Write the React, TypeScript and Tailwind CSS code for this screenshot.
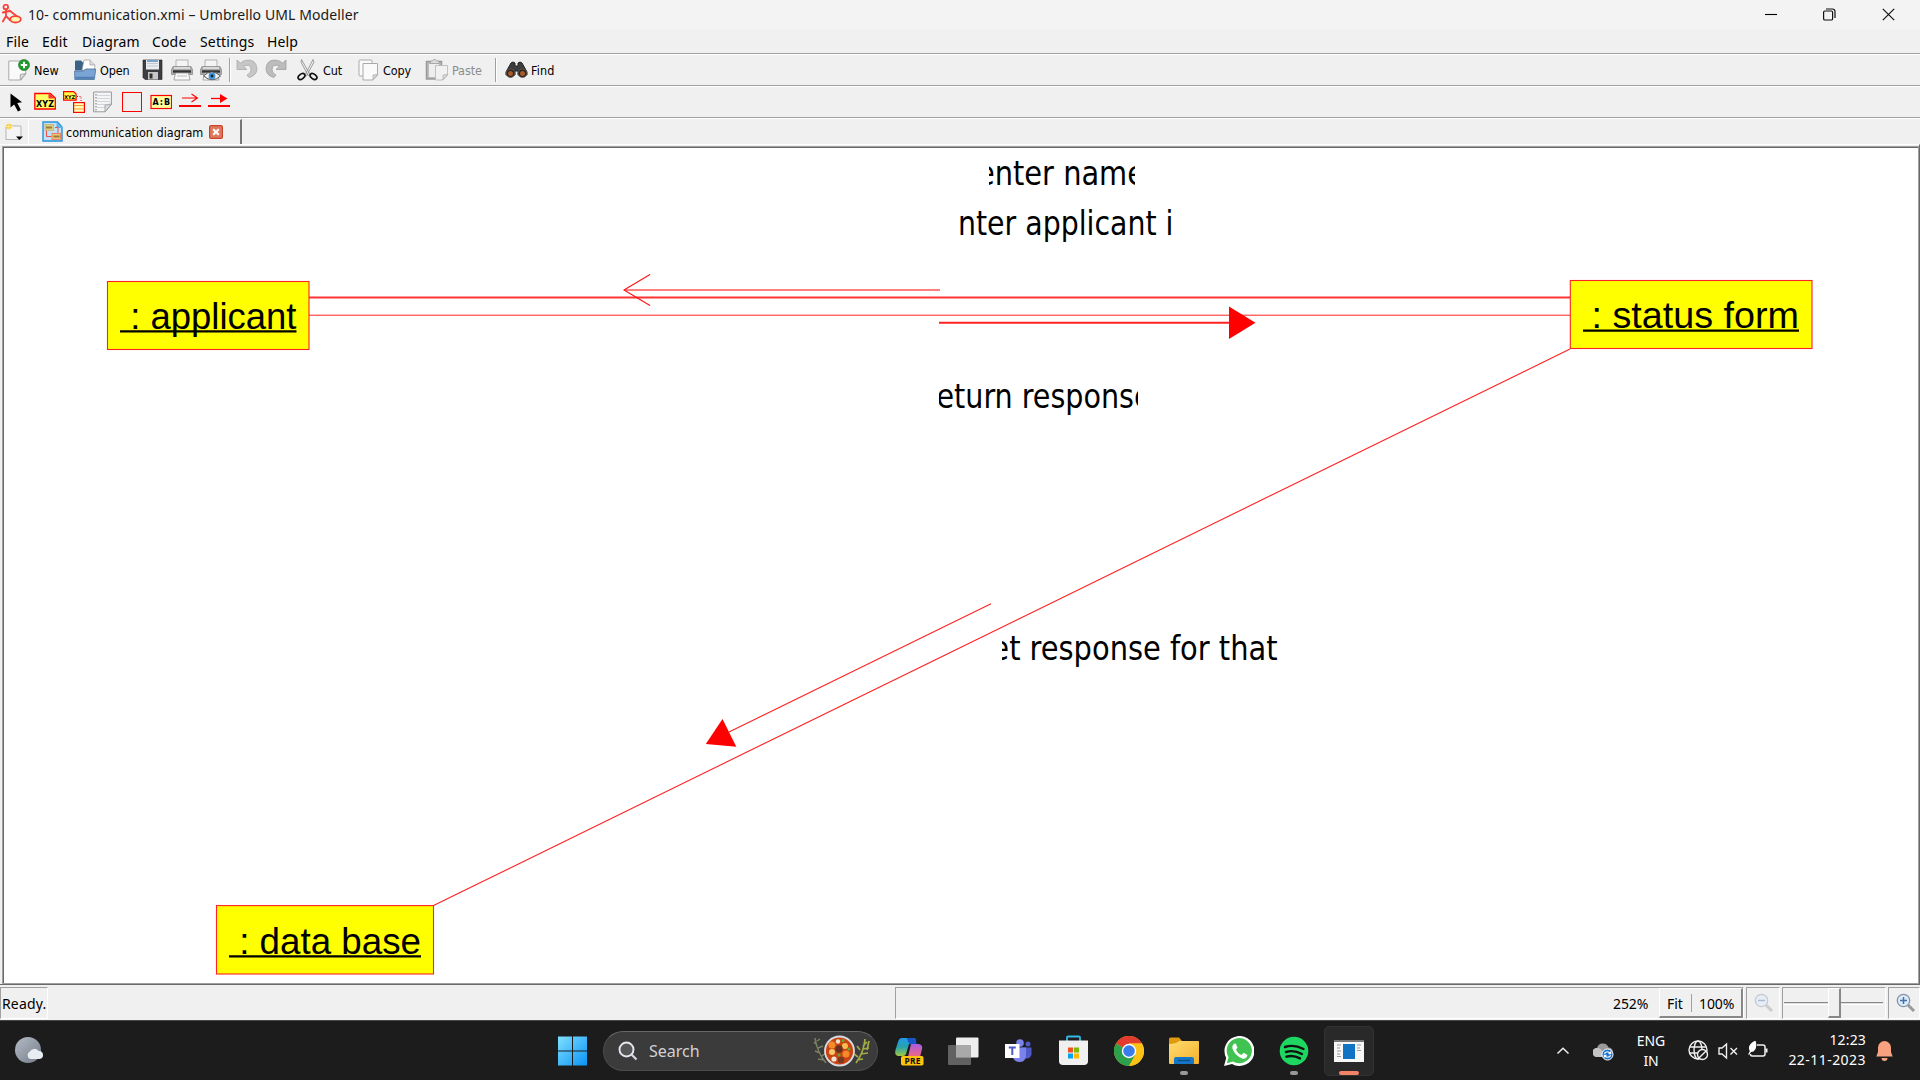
import React from "react";

const ui = "font-['Noto_Sans','Open_Sans',sans-serif]";
const tahoma = "font-['DejaVu_Sans_Condensed','DejaVu_Sans',sans-serif]";

type IconProps = { className?: string; w?: number; h?: number; children: React.ReactNode };
function Icon({ className = "", w = 22, h = 22, children }: IconProps) {
  return (
    <svg className={`block shrink-0 ${className}`} width={w} height={h} viewBox={`0 0 ${w} ${h}`} fill="none">
      {children}
    </svg>
  );
}

function TitleBar() {
  return (
    <div className="flex h-[29px] shrink-0 items-center bg-[#f3f3f3]">
      <Icon className="ml-[2px] mt-[-1px]" w={20} h={20}>
        <g stroke="#f4443c" strokeWidth="1.8" strokeLinecap="round">
          <circle cx="3.8" cy="3" r="2.3" />
          <path d="M4 5.500v6.500M.8 8.500l7-1.500M4 12l-3.200 5.500M4 12l4 4M7.500 6.500l7 5.500" />
          <ellipse cx="13.500" cy="15.300" rx="5.300" ry="3.200" fill="#fdf6b0" />
        </g>
      </Icon>
      <span className={`${ui} mt-[-1px] ml-[6px] w-[1700px] whitespace-nowrap text-[14px] tracking-[0.1px] text-[#1a1a1a]`}>
        10- communication.xmi – Umbrello UML Modeller
      </span>
      <Icon className="ml-[37px]" w={12} h={12}><path d="M0 5.500h12" stroke="#000" strokeWidth="1.100" /></Icon>
      <Icon className="ml-[46px]" w={13} h={13}>
        <rect x=".6" y="3" width="9" height="9" rx="1.300" stroke="#111" strokeWidth="1.200" />
        <path d="M3 1h6.500a2.500 2.500 0 0 1 2.500 2.500V10" stroke="#111" strokeWidth="1.200" />
      </Icon>
      <Icon className="ml-[46px]" w={13} h={13}><path d="M.8.800l11.400 11.400M12.200.800L.8 12.200" stroke="#111" strokeWidth="1.200" /></Icon>
    </div>
  );
}

function MenuBar() {
  const item = "whitespace-nowrap";
  return (
    <div className={`${ui} flex h-[24px] shrink-0 items-center pl-[6px] pt-[2px] text-[14px] leading-none tracking-[0.15px] text-black`}>
      <span className={`${item} w-[36px]`}>File</span>
      <span className={`${item} w-[40px]`}>Edit</span>
      <span className={`${item} w-[70px]`}>Diagram</span>
      <span className={`${item} w-[48px]`}>Code</span>
      <span className={`${item} w-[67px]`}>Settings</span>
      <span className={item}>Help</span>
    </div>
  );
}

const Plus = () => (
  <g>
    <circle cx="16" cy="6" r="5.500" fill="#1f9a2b" stroke="#11721c" strokeWidth=".6" />
    <path d="M16 2.800v6.400M12.800 6h6.400" stroke="#fff" strokeWidth="2" />
  </g>
);

const PrinterBody = () => (
  <g>
    <path d="M5 1h12v8H5z" fill="#f4f4f4" stroke="#999" strokeWidth=".7" />
    <path d="M2 7.500h18l1.500 3v5H.5v-5z" fill="#aaa" stroke="#777" strokeWidth=".6" />
    <path d="M3 9h16" stroke="#eee" strokeWidth="1.400" />
    <path d="M2 12.500h18" stroke="#333" strokeWidth="2.400" />
    <path d="M4.500 14h13l1.500 7H3z" fill="#f8f8f8" stroke="#888" strokeWidth=".7" />
    <path d="M6 17h10" stroke="#bbb" />
  </g>
);

function MainToolbar() {
  const label = "whitespace-nowrap pt-[2px]";
  return (
    <div className={`${tahoma} flex h-[30px] shrink-0 items-center pl-[8px] text-[12.5px] tracking-[-0.1px] text-black`}>
      <Icon className="w-[22px]">
        <path d="M.8 2h17v13l-5 6H.8z" fill="#fafafa" stroke="#aaa" />
        <path d="M17.800 14.500l-5.500 6.500v-5.500z" fill="#ddd" stroke="#999" strokeWidth=".8" />
        <Plus />
      </Icon>
      <span className={`${label} ml-[4px] w-[40px] tracking-[0.1px]`}>New</span>
      <Icon>
        <path d="M1 9V2.500Q1 1.500 2 1.500h5l2 2h10l1.500 8H1z" fill="#3d6288" />
        <path d="M8 11l2-10h6l5 5-1 6z" fill="#fff" stroke="#999" strokeWidth=".7" />
        <path d="M16 1v5h5" fill="#ddd" stroke="#999" strokeWidth=".7" />
        <path d="M.6 12h9l2-2h10.200l-1.500 10.500H.8z" fill="#7aa4d3" stroke="#49729f" strokeWidth=".8" />
        <path d="M1.500 18.800h18.500" stroke="#4f7db2" strokeWidth="2" />
      </Icon>
      <span className={`${label} ml-[4px] w-[42px]`}>Open</span>
      <Icon>
        <path d="M1 1h19v19.500H3l-2-2z" fill="#3d3d42" stroke="#222" strokeWidth=".6" />
        <path d="M4 1h13v9.500H4z" fill="#e8edf2" />
        <path d="M5 2h11" stroke="#5588c0" strokeWidth="1.500" />
        <path d="M5 4.500h11M5 7h11" stroke="#bbc" strokeWidth=".8" />
        <path d="M6 13h10v7.500H6z" fill="#c9c9c9" />
        <path d="M7.500 14.500h3v5h-3z" fill="#333" />
      </Icon>
      <Icon className="ml-[7px]"><PrinterBody /></Icon>
      <Icon className="ml-[7px]">
        <PrinterBody />
        <path d="M3.500 17q8-8 17 0-8 7.500-17 0z" fill="#edf4fa" stroke="#555" />
        <circle cx="12" cy="17" r="3.400" fill="#4694d5" /><circle cx="12" cy="17" r="1.400" fill="#123" />
      </Icon>
      <div className="ml-[7px] h-[24px] w-[2px] border-l border-[#a0a0a0] bg-white" />
      <Icon className="ml-[5px]">
        <path d="M1 1v9.500h10L7.500 7.200q7-3 7.500 3.300.300 3.500-4 5.500l2 2.500q8-2 8-9Q20 0 10.500 1.200 7 1.700 4.500 4z" fill="#c6c6c6" stroke="#aaa" strokeWidth=".8" />
      </Icon>
      <Icon className="ml-[7px]">
        <path d="M21 1v9.500H11l3.500-3.300q-7-3-7.500 3.300-.3 3.500 4 5.500l-2 2.500q-8-2-8-9Q2 0 11.500 1.200 15 1.700 17.500 4z" fill="#bcbcbc" stroke="#a0a0a0" strokeWidth=".8" />
      </Icon>
      <Icon className="ml-[10px]">
        <path d="M4.500.500l8.500 15-2 1L4 3zM16 .500L8 16l1.500 1L17 3z" fill="#eee" stroke="#888" strokeWidth=".8" />
        <ellipse cx="4.500" cy="17.500" rx="3.800" ry="2.400" transform="rotate(-38 4.500 17.500)" stroke="#111" strokeWidth="1.700" />
        <ellipse cx="16.500" cy="17.500" rx="3.800" ry="2.400" transform="rotate(38 16.500 17.500)" stroke="#111" strokeWidth="1.700" />
      </Icon>
      <span className={`${label} ml-[4px] w-[35px]`}>Cut</span>
      <Icon>
        <rect x="1" y="1" width="13" height="16" rx="1" fill="#fafafa" stroke="#aaa" />
        <path d="M5 4.500h14.500v11.500L15 21H5z" fill="#fafafa" stroke="#aaa" />
        <path d="M19.500 15.500L15 21v-5z" fill="#ddd" stroke="#aaa" strokeWidth=".8" />
      </Icon>
      <span className={`${label} ml-[3px] w-[42px]`}>Copy</span>
      <Icon w={24}>
        <path d="M1.500 2.500h15V20h-15z" fill="#bbb" stroke="#999" strokeWidth="1.500" />
        <path d="M4 5h10v13H4z" fill="#eee" />
        <path d="M5.500 4.500V2h2.200l1-1.500h1.800l1 1.500H14v2.500z" fill="#ddd" stroke="#999" strokeWidth=".7" />
        <path d="M10.500 6.500h12V16L18 21h-7.500z" fill="#f1f1f1" stroke="#b5b5b5" strokeWidth=".8" />
        <path d="M22.500 15.500L18 21v-5z" fill="#ddd" stroke="#aaa" strokeWidth=".7" />
      </Icon>
      <span className={`${label} ml-[3px] w-[43px] text-[#8c8c8c]`}>Paste</span>
      <div className="h-[24px] w-[2px] border-l border-[#a0a0a0] bg-white" />
      <Icon className="ml-[8px]" w={23} h={20}>
        <path d="M6 3q2-2 4 0v3h3V3q2-2 4 0l5 9v3h-9v-4h-3v4H1v-3z" fill="#3d3d3d" stroke="#222" />
        <circle cx="5.500" cy="13.300" r="4.300" fill="#2c2522" stroke="#666" strokeWidth=".7" />
        <circle cx="17.500" cy="13.300" r="4.300" fill="#2c2522" stroke="#666" strokeWidth=".7" />
        <circle cx="5.500" cy="13.500" r="2.500" fill="#aa5a25" /><circle cx="17.500" cy="13.500" r="2.500" fill="#aa5a25" />
      </Icon>
      <span className={`${label} ml-[3px] tracking-[0.15px]`}>Find</span>
    </div>
  );
}

const glyph = "font-['DejaVu_Sans','Liberation_Sans',sans-serif] font-bold";

function DiagramToolbar() {
  return (
    <div className="flex h-[30px] shrink-0 items-center pl-[8px]">
      <Icon w={20}><path d="M2.500 2.500v14l3.700-3 3.700 7 3-1.500-3.600-7 4.800-.800z" fill="#000" /></Icon>
      <Icon className="ml-[6px]">
        <path d="M.8 2.500h15.500l5 4.500v11H.8z" fill="#ff6" stroke="#f00" strokeWidth="1.300" />
        <path d="M14.500 2v5.500H21z" fill="#f33" />
        <text x="2" y="16" className={glyph} fontSize="8" fill="#000" textLength="18">XYZ</text>
      </Icon>
      <Icon className="ml-[7px]">
        <path d="M.6.600h10l2.500 2.500v6H.6z" fill="#ff4" stroke="#f00" strokeWidth="1.200" />
        <text x="1.200" y="7.500" className={glyph} fontSize="5" fill="#000" textLength="11">XYZ</text>
        <path d="M14 5.500h4v6" stroke="#f00" strokeDasharray="1 1.500" />
        <rect x="10.600" y="11.600" width="10.800" height="9.800" fill="#ffb" stroke="#f00" strokeWidth="1.200" />
        <path d="M11 14.500h10M11 18h10" stroke="#f93" />
      </Icon>
      <Icon className="ml-[8px]" w={22}>
        <path d="M.6 1h17.800v12.500L12 20.800H.6z" fill="#f5f5f5" stroke="#999" />
        <path d="M4 4.500h13M4 7.500h13M4 10.500h13M4 13.500h9M4 16.500h8" stroke="#c5cdd5" strokeWidth=".8" />
        <path d="M3 3v17" stroke="#888" strokeWidth="1.200" strokeDasharray="1.500 1.500" />
        <path d="M18.400 13L12 20.800V14z" fill="#ddd" stroke="#999" strokeWidth=".8" />
      </Icon>
      <Icon className="ml-[7px]"><rect x=".5" y="1.500" width="19" height="19" fill="#f1eeee" stroke="#f00" /></Icon>
      <Icon className="ml-[6px]">
        <rect x="1" y="4.500" width="20.500" height="13" fill="#ffffa0" stroke="#f00" strokeWidth="1.200" />
        <text x="2.500" y="14.300" className={glyph} fontSize="8" fill="#000" textLength="17.500">A:B</text>
      </Icon>
      <Icon className="ml-[7px]"><path d="M0 15h22" stroke="#f00" strokeWidth="2" /><path d="M3 7h15M12.500 3l6 4-6 4" stroke="#f00" strokeWidth="1.100" /></Icon>
      <Icon className="ml-[7px]"><path d="M0 15h22" stroke="#f00" strokeWidth="2" /><path d="M3 7.500h12" stroke="#f00" strokeWidth="1.300" /><path d="M12 3l7.500 4.500L12 12z" fill="#f00" /></Icon>
    </div>
  );
}

function TabRow() {
  return (
    <div className="flex h-[25px] shrink-0 items-end">
      <Icon className="mb-[2px] ml-[4px]" w={20} h={20}>
        <path d="M2 4h15v11l-2 2.500H2z" fill="#f5f5f5" stroke="#b5b5b5" />
        <circle cx="5" cy="4.500" r="2.800" fill="#f8cf33" />
        <path d="M5 .5v8M1 4.500h8" stroke="#ffeca0" strokeWidth=".8" />
        <path d="M12 14.500h7L15.500 18z" fill="#000" />
      </Icon>
      <div className={`${tahoma} ml-[4px] flex h-[25px] w-[214px] items-center border-l border-r-2 border-t border-l-white border-r-[#777] border-t-[#f8f8f8] pl-[13px] text-[12.5px] text-black`}>
        <Icon w={21} h={21} className="mt-[-2px]">
          <path d="M1 1h14.500L20 6v14H1z" fill="#bfe0f8" stroke="#2a91d8" strokeWidth="1.400" />
          <path d="M14.500 1v6H20V6z" fill="#59b5ed" />
          <rect x="3" y="3.500" width="8.500" height="6" fill="#dfcc83" stroke="#c9a860" strokeWidth=".7" />
          <rect x="10" y="12.500" width="8.500" height="6" fill="#e6c67b" stroke="#f06040" strokeWidth=".7" />
          <path d="M4.500 10v5.500h5M13 6.500h3V12" stroke="#f05040" />
          <path d="M4 6.500h6M11.500 15.500h6" stroke="#9b7c38" strokeWidth="2" />
        </Icon>
        <span className="ml-[3px] w-[143px] whitespace-nowrap pt-[2px]">communication diagram</span>
        <Icon w={14} h={14}>
          <rect x=".6" y=".6" width="12.800" height="12.800" rx="1.500" fill="#e07a5f" stroke="#c8452c" strokeWidth="1.200" />
          <path d="M4.200 4.200l5.600 5.600M9.800 4.200L4.200 9.800" stroke="#fff" strokeWidth="2" />
        </Icon>
      </div>
    </div>
  );
}

type BoxProps = { x: number; y: number; w: number; h: number; label: string; tx: number; tw: number; base: number; inset?: number };
function ObjectBox({ x, y, w, h, label, tx, tw, base, inset = 10.2 }: BoxProps) {
  return (
    <g>
      <rect x={x} y={y} width={w} height={h} fill="#ff0" stroke="#f22" strokeWidth="1.100" />
      <text x={tx + tw} y={base} textAnchor="end" fontSize="36.700" fill="#000" textLength={tw - inset} lengthAdjust="spacingAndGlyphs" className="font-['Liberation_Sans',Arial,sans-serif]">
        {label}
      </text>
      <path d={`M${tx} ${base + 2.9}h${tw}`} stroke="#000" strokeWidth="2.300" />
    </g>
  );
}

type MsgProps = { id: string; x: number; w: number; base: number; from: number; to: number; children: string };
function Message({ id, x, w, base, from, to, children }: MsgProps) {
  return (
    <g>
      <clipPath id={id}><rect x={from} y={base - 36} width={to - from} height="50" /></clipPath>
      <g clipPath={`url(#${id})`}>
        <text x={x} y={base} fontSize="33.500" textLength={w} lengthAdjust="spacingAndGlyphs" fill="#000" className={tahoma}>{children}</text>
      </g>
    </g>
  );
}

function DiagramCanvas() {
  return (
    <div className="h-[841px] shrink-0 border-b border-r border-t border-b-[#696969] border-r-[#696969] border-t-white pl-[2px] pt-px">
      <div className="h-full border border-[#a0a0a0]">
        <div className="h-full border-l border-t border-[#696969] bg-white">
          <svg className="block h-full w-full" viewBox="4 148 1914 835" preserveAspectRatio="xMinYMin slice" fill="none">
            <Message id="m1" x={977} w={168} base={185} from={989} to={1135}>enter name</Message>
            <Message id="m2" x={940.5} w={251} base={235} from={958} to={1172}>enter applicant id</Message>
            <Message id="m3" x={925.5} w={226} base={408} from={939} to={1138}>return response</Message>
            <Message id="m4" x={973} w={304.5} base={660} from={1002} to={1290}>get response for that</Message>
            <path d="M309 297.500h1261" stroke="#f33" strokeWidth="2" />
            <path d="M309 315.200h1261" stroke="#f22" />
            <path d="M625 290h315" stroke="#f00" />
            <path d="M650 274.500L624 290l26 15.500" stroke="#f11" strokeWidth="1.100" />
            <path d="M939 322.800h291" stroke="#f22" strokeWidth="2" />
            <path d="M1229 306.500l26.500 16.200-26.500 16.200z" fill="#f00" />
            <path d="M1570 349L433.500 905.500M991 603.700L729 732" stroke="#f22" strokeWidth="1.100" />
            <path d="M722.500 719L705.800 744l30.500 2.700z" fill="#f00" />
            <ObjectBox x={107.5} y={281.5} w={201.5} h={68} label=": applicant" tx={120} tw={176.500} base={328.5} />
            <ObjectBox x={1570.3} y={280.5} w={241.7} h={68} label=": status form" tx={1583} tw={216} base={327.7} inset={8.5} />
            <ObjectBox x={216.5} y={905.6} w={217} h={68.4} label=": data base" tx={229} tw={192} base={953.5} />
          </svg>
        </div>
      </div>
    </div>
  );
}

const Lens = ({ plus, faded }: { plus?: boolean; faded?: boolean }) => (
  <Icon w={20} h={20} className={faded ? "opacity-40" : ""}>
    <path d="M12 12l6 6" stroke="#999" strokeWidth="3" />
    <circle cx="7.500" cy="7.500" r="6.200" fill="#dcebfa" stroke="#8593a5" strokeWidth="1.300" />
    <path d={plus ? "M4 7.500h7M7.500 4v7" : "M4 7.500h7"} stroke="#4470ab" strokeWidth="1.500" />
  </Icon>
);

function StatusBar() {
  const sunken = "border border-b-white border-l-[#a0a0a0] border-r-white border-t-[#a0a0a0]";
  return (
    <div className={`${ui} flex h-[35px] shrink-0 items-center pt-px text-[14px] leading-none text-black`}>
      <div className={`${sunken} flex h-[32px] w-[48px] items-center whitespace-nowrap pl-px pt-[2px] tracking-[0.15px]`}>Ready.</div>
      <div className={`${sunken} ml-[847px] flex h-[32px] w-[849px] items-center justify-end`}>
        <span className="w-[46px] pt-[2px] tracking-[-0.1px]">252%</span>
        <div className="flex h-[30px] w-[84px] items-center border-b-2 border-r-2 border-l border-t border-b-[#888] border-l-white border-r-[#888] border-t-white pl-[7px] tracking-[-0.1px]">
          <span className="w-[24px] pt-[2px]">Fit</span>
          <div className="h-[18px] w-px bg-[#a0a0a0]" />
          <span className="ml-[7px] pt-[2px]">100%</span>
        </div>
      </div>
      <div className={`${sunken} ml-[2px] flex h-[32px] w-[34px] items-center pl-[7px]`}><Lens faded /></div>
      <div className={`${sunken} ml-[2px] flex h-[32px] w-[104px] items-center pl-px`}>
        <div className="h-[3px] w-[44px] border-b border-t border-b-white border-t-[#888] bg-[#ddd]" />
        <div className="h-[30px] w-[13px] border-b-2 border-r-2 border-l border-t border-b-[#888] border-l-white border-r-[#888] border-t-white" />
        <div className="h-[3px] w-[42px] border-b border-t border-b-white border-t-[#888] bg-[#ddd]" />
      </div>
      <div className={`${sunken} ml-[2px] flex h-[32px] w-[32px] items-center pl-[7px]`}><Lens plus /></div>
    </div>
  );
}

function Taskbar() {
  return (
    <div className={`${ui} flex h-[60px] shrink-0 items-center border-t border-[#484848] bg-[#1c1c1c] text-white`}>
      <Icon className="ml-[14px]" w={30} h={28}>
        <defs><linearGradient id="moon" x1="0" y1="0" x2="1" y2="1"><stop stopColor="#b4bdc7" /><stop offset="1" stopColor="#737c87" /></linearGradient></defs>
        <circle cx="14" cy="13" r="13" fill="url(#moon)" />
        <path d="M16.500 22a4 4 0 0 1-.5-7.500 5 5 0 0 1 8.500-.5 4 4 0 0 1 1 8z" fill="#e8edf2" />
      </Icon>
      <Icon className="ml-[514px]" w={30} h={30}>
        <defs><linearGradient id="win" x1="0" y1="0" x2="1" y2="1"><stop stopColor="#7fe0ff" /><stop offset="1" stopColor="#0a93f5" /></linearGradient></defs>
        <path d="M0 .500h14v14H0zM15 .500h14v14H15zM0 15.500h14v14H0zM15 15.500h14v14H15z" fill="url(#win)" />
      </Icon>
      <div className="ml-[15px] flex h-[40px] w-[275px] items-center rounded-full border border-[#4c4c4c] border-t-[#666] bg-[#3b3b3b]">
        <Icon className="ml-[14px]" w={20} h={20}><circle cx="8.500" cy="8.500" r="7" fill="#555" stroke="#e4e8ee" strokeWidth="1.900" /><path d="M13.500 13.500l5 5" stroke="#d4d8de" strokeWidth="2.300" /></Icon>
        <span className="ml-[11px] w-[164px] text-[16px] text-[#d2d2d2]">Search</span>
        <Icon w={58} h={32}>
          <path d="M2 3q2 14 11 25M4 10L1 7M5 13l5-2M7 18l-5-2M9 21l4-3M11 25l-6-1M4 6l3-2" stroke="#7b8262" strokeWidth="1.500" />
          <path d="M52 4q-1 13-9 24M50 11l4-4M50 14l6-1M48 19l7-1M47 15l-3-4M45 22l-4-3M44 25l6-1M56 6l-2 9" stroke="#a2ab46" strokeWidth="1.700" />
          <circle cx="26.500" cy="16" r="14.500" fill="#c94412" stroke="#d8dde5" strokeWidth="1.800" />
          <circle cx="19" cy="10" r="3.500" fill="#f68a28" /><circle cx="33" cy="19" r="3.500" fill="#f68a28" /><circle cx="19" cy="17" r="3" fill="#f3c96c" /><circle cx="32" cy="11" r="3" fill="#f7bd4e" />
          <circle cx="26" cy="14" r="3.700" fill="#66311d" /><circle cx="28" cy="25" r="3.200" fill="#7b3822" /><circle cx="21" cy="24" r="2.600" fill="#f2e4ce" /><circle cx="25" cy="6.500" r="2.200" fill="#e9e3c9" />
          <circle cx="30" cy="5.500" r="1.500" fill="#5cab34" /><circle cx="36" cy="14" r="1.500" fill="#5cab34" /><circle cx="26" cy="20" r="1.500" fill="#5cab34" />
        </Icon>
      </div>
      <Icon className="ml-[16px]" w={32} h={30}>
        <defs>
          <linearGradient id="cp1" x1="0" y1="0" x2="0" y2="1"><stop stopColor="#249ae8" /><stop offset=".5" stopColor="#25a2b0" /><stop offset="1" stopColor="#a4c93b" /></linearGradient>
          <linearGradient id="cp2" x1="0" y1="0" x2="0" y2="1"><stop stopColor="#a95ce0" /><stop offset="1" stopColor="#f3677e" /></linearGradient>
        </defs>
        <path d="M8 2h12q2 0 1.500 3L19 8h-4l-3 10q-.500 2-3 2H4q-4-1-2.500-6L4 6q1-4 4-4z" fill="url(#cp1)" />
        <path d="M13 2h7q2 .500 2.500 6H16q-2-1-3-6z" fill="#1656c9" />
        <path d="M17 8h8q4 1 3 5l-2 8H14z" fill="url(#cp2)" />
        <rect x="7" y="20" width="22.500" height="9.500" rx="1.800" fill="#ffc20d" />
        <text x="10.500" y="28" fontSize="8.500" fill="#111" className="font-['Noto_Sans',sans-serif] font-bold" textLength="16">PRE</text>
      </Icon>
      <Icon className="ml-[22px]" w={31} h={30}>
        <rect x="8" y="1.500" width="22.500" height="20" rx="1" fill="#eee" />
        <rect x="0" y="9" width="23" height="20" rx="1" fill="#6d6d6d" fillOpacity=".85" />
        <path d="M8 9h15v12.500H8z" fill="#a9a9a9" />
      </Icon>
      <Icon className="ml-[26px]" w={28} h={28}>
        <circle cx="15" cy="6" r="3.800" fill="#7b83eb" /><circle cx="23" cy="7" r="2.500" fill="#5059c9" />
        <path d="M16 10.500h10.500v7q-1 4-5 4H17z" fill="#5059c9" /><path d="M8 10.500h13v9q-1 5.500-6.500 5.500T8 20z" fill="#7b83eb" />
        <rect y="7" width="14.500" height="14" fill="#fff" />
        <path d="M3.800 10.500h7M7.300 10.500V18" stroke="#5059c9" strokeWidth="2" />
      </Icon>
      <Icon className="ml-[26px]" w={30} h={31}>
        <path d="M8 7V2.500q0-1 1-1h11q1 0 1 1V7" stroke="#33b9ea" strokeWidth="1.800" />
        <path d="M0 5.500h29V26q0 4-4 4H4q-4 0-4-4z" fill="#f0f0f0" />
        <path d="M9 12.500h5v5H9z" fill="#f25022" /><path d="M15 12.500h5v5h-5z" fill="#7fba00" /><path d="M9 18.500h5v5H9z" fill="#00a4ef" /><path d="M15 18.500h5v5h-5z" fill="#ffb900" />
      </Icon>
      <Icon className="ml-[25px]" w={30} h={30}>
        <circle cx="15" cy="15" r="15" fill="#fbc116" />
        <path d="M15 15L2 7.500A15 15 0 0 1 28 7.500H15z" fill="#e33b2e" />
        <path d="M2 7.500A15 15 0 0 0 15 30l6.500-11.300L15 15z" fill="#2da04c" />
        <path d="M15 7.500h13a15 15 0 0 1-13 22.500l6.500-11.300z" fill="#fbc116" />
        <circle cx="15" cy="15" r="7.200" fill="#fff" /><circle cx="15" cy="15" r="5.800" fill="#3b7ced" />
      </Icon>
      <div className="relative ml-[25px]">
        <Icon w={30} h={30}>
          <defs><linearGradient id="fold" x1="0" y1="0" x2="1" y2="1"><stop stopColor="#ffdc70" /><stop offset="1" stopColor="#f5b02c" /></linearGradient></defs>
          <path d="M0 3q0-1.500 1.500-1.500h8.500l3 3.500v4H0z" fill="#df9a0d" />
          <path d="M0 8q7 0 10-3h19q1 0 1 1v21q0 1-1 1H1q-1 0-1-1z" fill="url(#fold)" />
          <path d="M5 28v-5q0-2 2-2h16q2 0 2 2v5z" fill="#1576c5" /><path d="M9 24.500h12" stroke="#0a4a8d" strokeWidth="1.300" />
        </Icon>
        <div className="absolute left-[11px] top-[35px] h-[4px] w-[8px] rounded-full bg-[#999]" />
      </div>
      <Icon className="ml-[25px]" w={30} h={30}>
        <path d="M0 30l2.200-8A15 15 0 1 1 8 28z" fill="#fff" />
        <path d="M2.800 27.200l1.700-6A12.600 12.600 0 1 1 9 25.600z" fill="#40c351" />
        <path d="M10.500 7.500q-3.500 2-1.500 6.500 3 6 9 8.500 4.500 1 5.500-3.500l-4-2.200-2 2.200q-4-1.500-5.500-5.500l1.500-1.800-1.600-4z" fill="#fff" />
      </Icon>
      <div className="relative ml-[25px]">
        <Icon w={30} h={30}>
          <circle cx="15" cy="15" r="14.300" fill="#1ed760" />
          <path d="M6 11q9-3 18.500 2M7 16q8-2.500 16 2M7.500 20.700q7-2 13.500 1.700" stroke="#111" strokeWidth="2.400" strokeLinecap="round" />
        </Icon>
        <div className="absolute left-[11px] top-[35px] h-[4px] w-[8px] rounded-full bg-[#999]" />
      </div>
      <div className="relative ml-[15px] flex h-[50px] w-[50px] items-center justify-center rounded-[5px] border border-[#333] bg-[#292929]">
        <Icon w={30} h={24}>
          <rect y="1" width="30" height="22" fill="#f7f7f7" /><path d="M0 1h30v2H0z" fill="#777" />
          <rect x="9" y="5" width="12" height="15" fill="#1173c4" />
          <path d="M3 6h4M3 9h3M3 12h4M3 15h3M3 17.500h4M23 6h4M23 9h3M23 11.500h4" stroke="#999" />
        </Icon>
        <div className="absolute left-[14px] top-[44px] h-[4px] w-[20px] rounded-full bg-[#f48267]" />
      </div>
      <Icon className="ml-[182px]" w={14} h={10}><path d="M1.500 7.500L7 2.200l5.500 5.300" stroke="#eee" strokeWidth="1.500" /></Icon>
      <Icon className="ml-[23px]" w={22} h={20}>
        <path d="M4 16a4.500 4.500 0 0 1 0-9 6 6 0 0 1 11.500-.500 4.500 4.500 0 0 1 2 8.500z" fill="#9a9a9a" /><path d="M4 16a4.500 4.500 0 0 1 0-9q4-1 9 9z" fill="#c4c4c4" />
        <circle cx="14.500" cy="13.500" r="5.500" fill="#1673cf" stroke="#fff" />
        <path d="M11.300 12.500q3.200-3.500 6.200 0M17.700 14.500q-3.200 3.500-6.200 0M17.700 10.500v2.200h-2.200M11.300 16.500v-2.200h2.200" stroke="#fff" strokeWidth="1.200" />
      </Icon>
      <div className="ml-[18px] w-[36px] text-center text-[14px] leading-[20px] tracking-[-0.1px]">ENG<br />IN</div>
      <Icon className="ml-[19px]" w={22} h={22}>
        <g stroke="#f0f0f0" strokeWidth="1.400"><circle cx="10" cy="10" r="9" /><ellipse cx="10" cy="10" rx="4" ry="9" /><path d="M2 7h16M2 13h8" /></g>
        <circle cx="14.500" cy="14.500" r="5" fill="#1c1c1c" stroke="#f0f0f0" strokeWidth="1.400" /><path d="M11.200 17.800l6.600-6.600" stroke="#f0f0f0" strokeWidth="1.400" />
      </Icon>
      <Icon className="ml-[8px]" w={22} h={18}><path d="M1 6h3l4.500-4v14L4 12H1zM12.500 6l6.500 6.500M19 6l-6.500 6.500" stroke="#f0f0f0" strokeWidth="1.400" /></Icon>
      <Icon className="ml-[7px]" w={22} h={20}>
        <path d="M10 4h6q2 0 2 2v7q0 2-2 2H5q-1.500 0-1.500-2" stroke="#f0f0f0" strokeWidth="1.500" /><path d="M19.500 7.500v4" stroke="#f0f0f0" strokeWidth="2" />
        <path d="M8.500-.5Q11 7 6.500 10.500L4 11l-2 3-.8-.8 1.600-3Q-.5 4 8.500-.5z" fill="#fff" />
      </Icon>
      <div className="ml-[8px] flex w-[89px] flex-col items-end whitespace-nowrap text-[14px] leading-[20px] mt-[-2px]">
        <span className="tracking-[0.15px]">12:23</span>
        <span className="tracking-[0.45px]">22-11-2023</span>
      </div>
      <Icon className="ml-[10px]" w={17} h={20}><path d="M8.500 0a6.500 6.500 0 0 1 6.500 6.500v4.500l1.700 4.500H.3L2 11V6.500A6.500 6.500 0 0 1 8.500 0zM5.500 17h6a3 3 0 0 1-6 0z" fill="#f8a17e" /></Icon>
    </div>
  );
}

const Rule = () => <div className="h-[2px] shrink-0 border-t border-[#a0a0a0] bg-white" />;

export default function App() {
  return (
    <div className="flex h-[1080px] w-[1920px] flex-col overflow-hidden bg-[#f0f0f0]">
      <TitleBar />
      <MenuBar />
      <Rule />
      <MainToolbar />
      <Rule />
      <DiagramToolbar />
      <Rule />
      <TabRow />
      <DiagramCanvas />
      <StatusBar />
      <Taskbar />
    </div>
  );
}
